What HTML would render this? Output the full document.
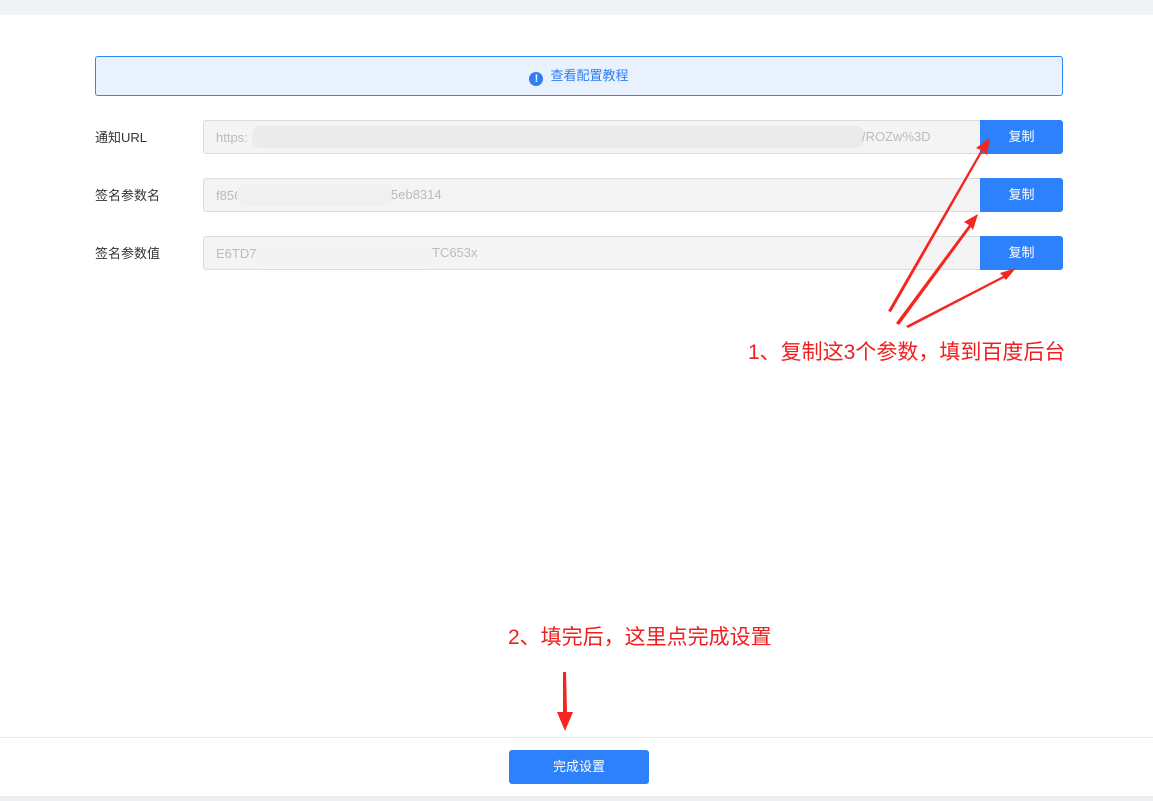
<!DOCTYPE html>
<html><head><meta charset="utf-8"><style>
body{margin:0;width:1153px;height:801px;position:relative;background:#fff;font-family:"Liberation Sans","Noto Sans CJK SC",sans-serif;overflow:hidden}
.top{position:absolute;left:0;top:0;width:1153px;height:15px;background:#f2f3f5}
.bot{position:absolute;left:0;top:796px;width:1153px;height:5px;background:#eeeff1}
.banner{position:absolute;left:95px;top:56px;width:966px;height:38px;border:1px solid #2d87f7;border-radius:3px;background:#e8f1fd;color:#2d7ff5;font-size:13px;line-height:38px;text-align:center}
.ic{display:inline-block;width:14px;height:14px;border-radius:50%;background:#2d7ff5;color:#fff;font-size:11px;line-height:14px;font-weight:bold;vertical-align:-2px;margin-right:7px}
.lab{position:absolute;left:95px;font-size:13px;color:#333}
.inp{position:absolute;left:203px;border:1px solid #dcdcdc;border-right:none;border-radius:3px 0 0 3px;background:#f4f4f4;color:#bbb;font-size:13px;line-height:34px;padding-left:12px;box-sizing:border-box;width:777px;height:34px}
.blur{position:absolute;background:#ebebeb;border-radius:8px;height:22px}
.btn{position:absolute;left:980px;width:83px;height:34px;background:#2d82fc;border-radius:0 3px 3px 0;color:#fff;font-size:13px;line-height:34px;text-align:center}
.red{position:absolute;color:#f01e1e;font-size:21px;white-space:nowrap}
.line{position:absolute;left:0;top:737px;width:1153px;height:1px;background:#ececec}
.done{position:absolute;left:509px;top:750px;width:140px;height:34px;background:#2d82fc;border-radius:3px;color:#fff;font-size:13px;line-height:34px;text-align:center}
</style></head><body>
<div class="top"></div>
<div class="banner"><span class="ic">!</span>查看配置教程</div>
<div class="lab" style="top:127px">通知URL</div>
<div class="lab" style="top:185px">签名参数名</div>
<div class="lab" style="top:243px">签名参数值</div>
<div class="inp" style="top:120px">https:</div>
<div class="blur" style="left:252px;top:126px;width:612px"></div>
<div class="inp" style="top:120px;background:transparent;border:none;left:862px;width:110px;padding-left:0">/ROZw%3D</div>
<div class="inp" style="top:178px">f856</div>
<div class="blur" style="left:237px;top:184px;width:156px;background:#f0f0f0"></div>
<div class="inp" style="top:178px;background:transparent;border:none;left:391px;width:100px;padding-left:0">5eb8314</div>
<div class="inp" style="top:236px">E6TD7</div>
<div class="blur" style="left:256px;top:244px;width:178px;background:#f3f3f3"></div>
<div class="inp" style="top:236px;background:transparent;border:none;left:432px;width:100px;padding-left:0">TC653x</div>
<div class="btn" style="top:120px">复制</div>
<div class="btn" style="top:178px">复制</div>
<div class="btn" style="top:236px">复制</div>
<svg style="position:absolute;left:0;top:0" width="1153" height="801">
<g fill="#f5261f">
<polygon points="888,311 981,150 976,148 990,138 987,155 983,151 891,312"/>
<polygon points="896,323 969,225 964,222 978,214 973,230 971,227 899,325"/>
<polygon points="906,326 1003,276 1000,273 1016,268 1006,280 1004,278 908,328"/>
<polygon points="563,672 566,672 567,712 573,712 565,731 557,712 563,712"/>
</g></svg>
<div class="red" style="left:748px;top:336px">1、复制这3个参数，填到百度后台</div>
<div class="red" style="left:508px;top:621px">2、填完后，这里点完成设置</div>
<div class="line"></div>
<div class="done">完成设置</div>
<div class="bot"></div>
</body></html>
